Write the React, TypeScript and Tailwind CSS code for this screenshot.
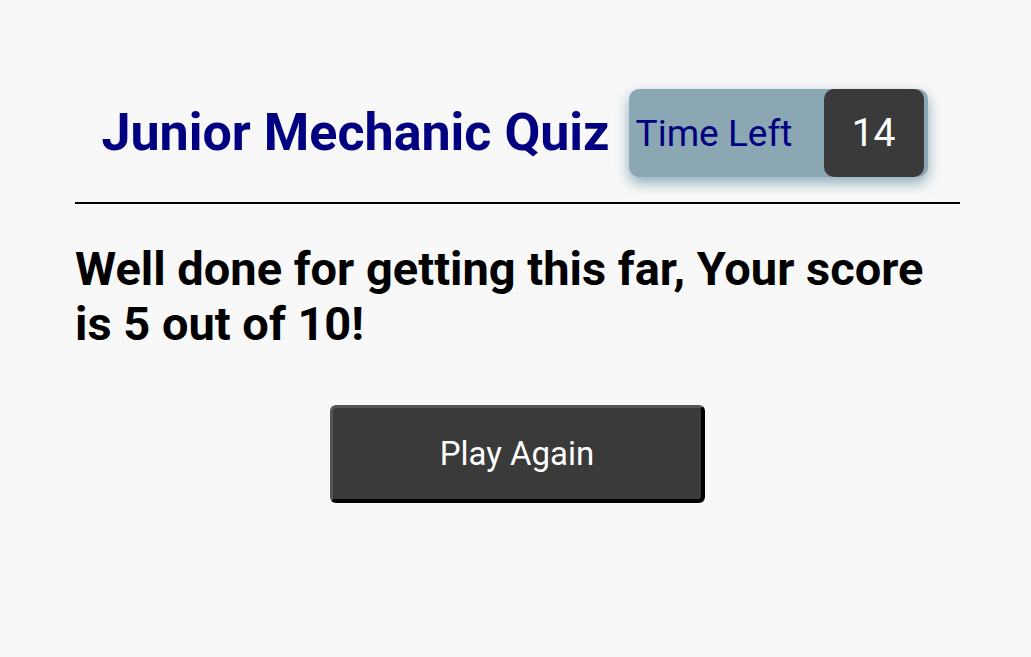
export default function App() {
  return (
    <div className="min-h-[657px] w-full bg-[#f8f8f8] font-['Roboto',sans-serif]">
      <div className="ml-[75px] w-[885px] pt-[89px]">
        <header className="flex items-center justify-center gap-[19px] pr-[6px]">
          <h1 className="text-[52px] font-bold leading-none text-[#000080]">
            Junior Mechanic Quiz
          </h1>
          <div className="flex h-[88px] w-[299px] items-center justify-between rounded-[10px] bg-[#8ba7b3] pl-[7px] pr-[4px] shadow-[0_6px_14px_rgba(100,140,160,0.7)]">
            <span className="text-[37px] leading-none text-[#000080]">Time Left</span>
            <span className="flex h-full w-[100px] items-center justify-center rounded-[10px] bg-[#3a3a3a] text-[39px] text-white">
              14
            </span>
          </div>
        </header>
        <hr className="mt-[25px] border-t-2 border-black" />
        <h2 className="mt-[37px] text-[47px] font-bold leading-[55px] text-black">
          Well done for getting this far, Your score is 5 out of 10!
        </h2>
        <div className="mt-[54px] flex justify-center">
          <button className="h-[98px] w-[375px] rounded-[6px] border-t-[3px] border-l-[3px] border-r-[4px] border-b-[4px] border-t-[#555555] border-l-[#555555] border-r-black border-b-black bg-[#3a3a3a] text-[33px] text-white">
            Play Again
          </button>
        </div>
      </div>
    </div>
  );
}
